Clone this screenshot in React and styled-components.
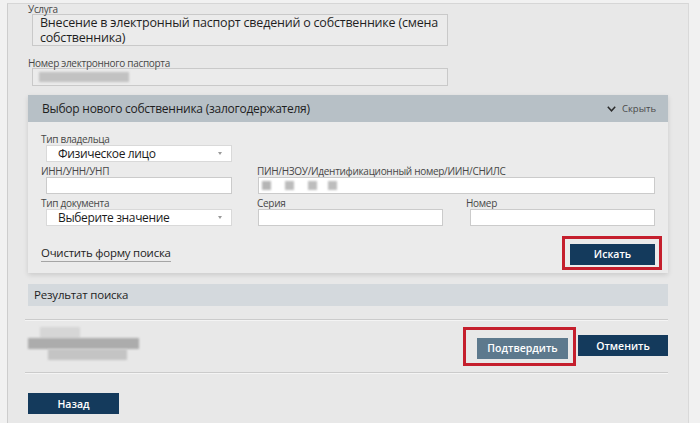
import React from "react";
import styled, { createGlobalStyle } from "styled-components";

const GlobalStyle = createGlobalStyle`
  html, body {
    margin: 0;
    padding: 0;
    background: #f1f1f1;
    font-family: "Open Sans", "Noto Sans", sans-serif;
  }
  * { box-sizing: border-box; }
`;

const Frame = styled.div`
  padding: 3px 11px 0 7px;
  height: 423px;
  overflow: hidden;
`;

const Page = styled.div`
  height: 100%;
  background: #e8e8e8;
  border-left: 1px solid #cdcdcd;
  border-top: 1px solid #d6d6d6;
  border-right: 1px solid #d9d9d9;
  padding: 0 20px 0 20px;
`;

const Label = styled.div`
  font-size: 10px;
  line-height: 10px;
  height: 10px;
  letter-spacing: -0.3px;
  color: #474747;
  white-space: nowrap;
  margin-top: ${(p) => p.$top || 0}px;
  margin-left: ${(p) => p.$indent || 0}px;
`;

const ReadBox = styled.div`
  margin-left: 4px;
  width: 416px;
  min-height: ${(p) => p.$height || 18}px;
  border: 1px solid #c9c9c9;
  background: #ebebeb;
  padding: 0 7px;
  font-size: 12.5px;
  letter-spacing: -0.2px;
  line-height: 15px;
  color: #1f1f1f;
  display: flex;
  align-items: center;
`;

const Blur = styled.div`
  background: ${(p) => p.$color || "#bdbdbd"};
  filter: blur(1.2px);
  width: ${(p) => p.$w}px;
  height: ${(p) => p.$h}px;
  margin-left: ${(p) => p.$ml || 0}px;
`;

const Panel = styled.section`
  margin-top: 9px;
  background: #ebebeb;
  box-shadow: 0 2px 5px rgba(0, 0, 0, 0.13);
`;

const PanelHeader = styled.header`
  height: 27px;
  background: #b7c0c6;
  display: flex;
  align-items: center;
  justify-content: space-between;
  padding: 0 12px 0 14px;
  font-size: 12px;
  letter-spacing: -0.25px;
  color: #1e1e1e;
`;

const Toggle = styled.span`
  display: flex;
  align-items: center;
  gap: 6px;
  font-size: 9.5px;
  letter-spacing: 0;
  color: #4b4b4b;
`;

const PanelBody = styled.div`
  padding: 12px 13px 8px 13px;
`;

const FormGrid = styled.div`
  display: grid;
  grid-template-columns: 191px 209px 189px;
  grid-template-rows: auto auto auto;
  row-gap: 4px;
`;

const Field = styled.div`
  grid-column: ${(p) => p.$col || "auto"};
  grid-row: ${(p) => p.$row || "auto"};
  display: flex;
  flex-direction: column;
`;

const Input = styled.div`
  margin-top: 1px;
  margin-left: ${(p) => p.$indent || 0}px;
  width: ${(p) => p.$w}px;
  height: 17px;
  background: #fff;
  border: 1px solid #cbcbcb;
  display: flex;
  align-items: center;
  padding-left: 3px;
`;

const Select = styled(Input)`
  justify-content: space-between;
  padding: 0 9px 0 11px;
  font-size: 12px;
  letter-spacing: -0.35px;
  color: #1b1b1b;
  border-color: #d9d9d9;
  &::after {
    content: "";
    border-left: 2px solid transparent;
    border-right: 2px solid transparent;
    border-top: 3px solid #9a9a9a;
  }
`;

const FormFooter = styled.div`
  margin-top: 15px;
  display: flex;
  align-items: center;
  justify-content: space-between;
`;

const ClearLink = styled.a`
  font-size: 11.4px;
  letter-spacing: -0.2px;
  color: #222;
  font-weight: 500;
  line-height: 14px;
  border-bottom: 1px solid #a5a5a5;
  padding-bottom: 1px;
  margin-top: 2px;
  cursor: pointer;
`;

const Highlight = styled.div`
  position: relative;
  &::after {
    content: "";
    position: absolute;
    top: ${(p) => p.$t}px;
    right: ${(p) => p.$r}px;
    bottom: ${(p) => p.$b}px;
    left: ${(p) => p.$l}px;
    border: 3px solid #c51f2d;
    pointer-events: none;
  }
`;

const Button = styled.button`
  width: ${(p) => p.$w || 85}px;
  height: 21px;
  border: none;
  padding: 0;
  background: ${(p) => (p.$muted ? "#5d798d" : "#143a5c")};
  color: #fff;
  font-family: inherit;
  font-size: 10.5px;
  font-weight: 600;
  letter-spacing: 0;
`;

const ResultBar = styled.div`
  margin-top: 11px;
  height: 22px;
  background: #d4d9dd;
  padding-left: 6px;
  font-size: 11.5px;
  letter-spacing: -0.2px;
  line-height: 22px;
  color: #1e1e1e;
`;

const ResultRow = styled.div`
  margin: 13px 0 0 -3px;
  height: 54px;
  border-top: 1px solid #cbcbcb;
  border-bottom: 1px solid #cbcbcb;
  box-shadow: inset 0 1px 0 #f4f4f4, 0 1px 0 #f4f4f4;
  display: flex;
  align-items: center;
  justify-content: space-between;
  padding-left: 3px;
`;

const BlurStack = styled.div`
  display: flex;
  flex-direction: column;
  margin-top: -4px;
`;

const Actions = styled.div`
  display: flex;
  gap: 10px;
  margin-top: 3px;
`;

const BackRow = styled.div`
  margin-top: 18px;
`;

function Chevron() {
  return (
    <svg width="9" height="6" viewBox="0 0 9 6">
      <path d="M0.8 0.8 L4.5 4.8 L8.2 0.8" fill="none" stroke="#2b2b2b" strokeWidth="1.5" />
    </svg>
  );
}

function Squares() {
  return (
    <>
      <Blur $w={9} $h={9} $color="#b5b5b5" />
      <Blur $w={9} $h={9} $ml={14} $color="#bcbcbc" />
      <Blur $w={9} $h={9} $ml={14} $color="#bdbdbd" />
      <Blur $w={9} $h={9} $ml={11} $color="#bdbdbd" />
    </>
  );
}

export default function App() {
  return (
    <Frame>
      <GlobalStyle />
      <Page>
        <Label>Услуга</Label>
        <ReadBox $height={32}>
          Внесение в электронный паспорт сведений о собственнике (смена собственника)
        </ReadBox>

        <Label $top={12}>Номер электронного паспорта</Label>
        <ReadBox>
          <Blur $w={90} $h={10} $ml={-1} $color="#c2c2c2" />
        </ReadBox>

        <Panel>
          <PanelHeader>
            <span>Выбор нового собственника (залогодержателя)</span>
            <Toggle>
              <Chevron />
              Скрыть
            </Toggle>
          </PanelHeader>
          <PanelBody>
            <FormGrid>
              <Field $col="1" $row="1">
                <Label>Тип владельца</Label>
                <Select $indent={5} $w={186}>Физическое лицо</Select>
              </Field>
              <Field $col="1" $row="2">
                <Label>ИНН/УНН/УНП</Label>
                <Input $indent={5} $w={186} />
              </Field>
              <Field $col="2 / 4" $row="2">
                <Label $indent={25}>ПИН/НЗОУ/Идентификационный номер/ИИН/СНИЛС</Label>
                <Input $indent={26} $w={397}>
                  <Squares />
                </Input>
              </Field>
              <Field $col="1" $row="3">
                <Label>Тип документа</Label>
                <Select $indent={5} $w={186}>Выберите значение</Select>
              </Field>
              <Field $col="2" $row="3">
                <Label $indent={25}>Серия</Label>
                <Input $indent={26} $w={185} />
              </Field>
              <Field $col="3" $row="3">
                <Label $indent={25}>Номер</Label>
                <Input $indent={29} $w={185} />
              </Field>
            </FormGrid>
            <FormFooter>
              <ClearLink>Очистить форму поиска</ClearLink>
              <Highlight $t={-5} $r={-7} $b={-5} $l={-8}>
                <Button $w={85}>Искать</Button>
              </Highlight>
            </FormFooter>
          </PanelBody>
        </Panel>

        <ResultBar>Результат поиска</ResultBar>

        <ResultRow>
          <BlurStack>
            <Blur $w={40} $h={11} $ml={12} $color="#d6d6d6" />
            <Blur $w={111} $h={11} $color="#acacac" />
            <Blur $w={79} $h={11} $ml={20} $color="#c4c4c4" />
          </BlurStack>
          <Actions>
            <Highlight $t={-8} $r={-8} $b={-7} $l={-14}>
              <Button $muted $w={91}>Подтвердить</Button>
            </Highlight>
            <Button $w={90}>Отменить</Button>
          </Actions>
        </ResultRow>

        <BackRow>
          <Button $w={91}>Назад</Button>
        </BackRow>
      </Page>
    </Frame>
  );
}
